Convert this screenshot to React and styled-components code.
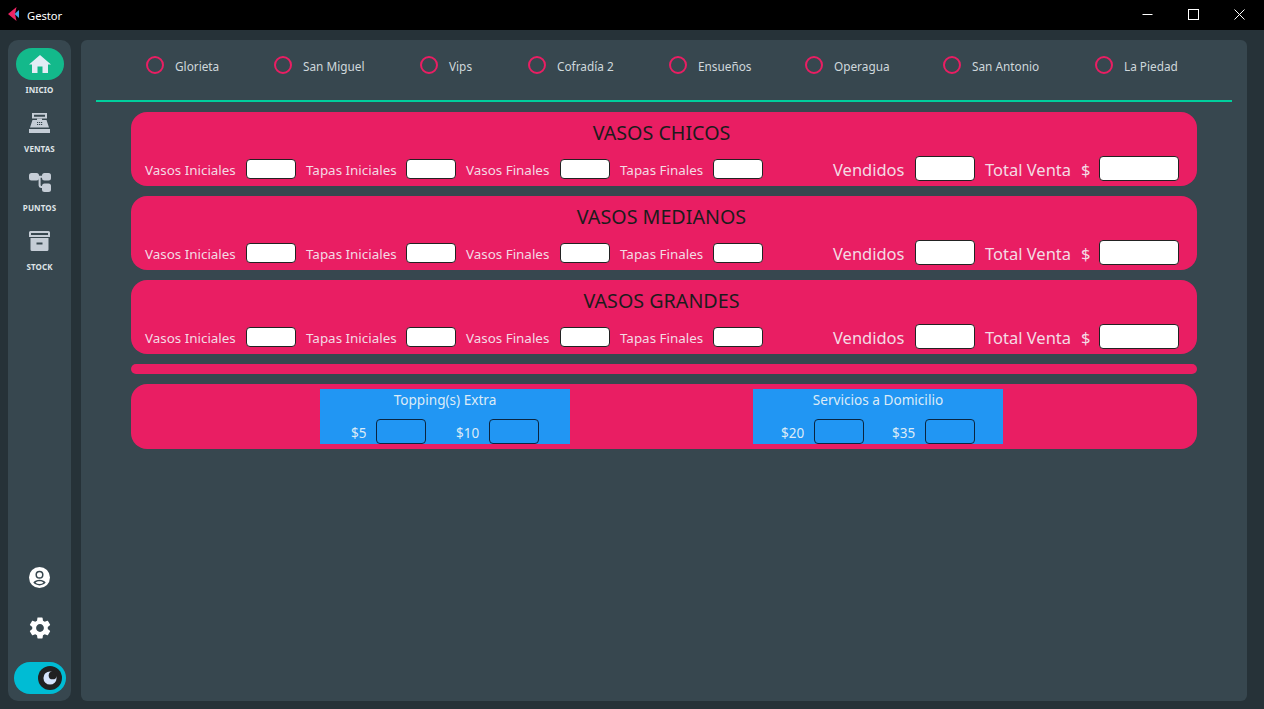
import React from 'react';
import styled, { createGlobalStyle } from 'styled-components';
import { MdSettings } from 'react-icons/md';

const Global = createGlobalStyle`
  html, body { margin: 0; padding: 0; height: 100%; background: #263238; overflow: hidden; }
  * { box-sizing: border-box; }
  body { font-family: "Noto Sans", "Open Sans", "Liberation Sans", sans-serif; }
`;

const Shell = styled.div`
  width: 1264px; height: 709px; display: flex; flex-direction: column; background: #263238;
`;
const TitleBar = styled.header`
  height: 30px; background: #000; display: flex; align-items: center; padding: 0 2px 0 8px; color: #fff; font-size: 11.2px;
`;
const LogoMark = styled.svg`margin-top: -2px; flex: none;`;
const AppName = styled.span`margin-left: 7px; flex: 1;`;
const WinButton = styled.div`
  width: 46px; height: 28px; align-self: flex-start; display: flex; align-items: center; justify-content: center;
`;
const Body = styled.div`
  flex: 1; display: flex; gap: 10px; padding: 10px 17px 8px 8px;
`;
const Sidebar = styled.nav`
  width: 63px; background: #37474f; border-radius: 10px; display: flex; flex-direction: column; align-items: center; padding-top: 8px;
`;
const NavItem = styled.div`
  width: 48px; height: 59px; display: flex; flex-direction: column; align-items: center; color: #c5cdd6;
`;
const NavIcon = styled.div`
  width: 48px; height: 32px; border-radius: 16px; display: flex; align-items: center; justify-content: center;
  background: ${p => (p.$active ? '#13b98b' : 'transparent')};
  color: ${p => (p.$active ? '#e3ecf5' : '#c5cdd6')};
`;
const NavLabel = styled.span`
  font-size: 8px; font-weight: 700; line-height: 12px; margin-top: 4px; color: #dfe4e7; letter-spacing: .1px;
`;
const Spacer = styled.div`flex: 1;`;
const RoundIcon = styled.div`
  height: 50px; display: flex; align-items: center; justify-content: center; color: #fff;
`;
const ProfileSvg = styled.svg`margin-bottom: 2px;`;
const Toggle = styled.div`
  width: 52px; height: 32px; border-radius: 16px; background: #00bcd4; margin: 9px 0 7px; padding: 4px 4px 4px 24px; display: flex;
`;
const Thumb = styled.div`
  width: 24px; height: 24px; border-radius: 50%; background: #212121; display: flex; align-items: center; justify-content: center;
`;
const Main = styled.main`
  flex: 1; background: #37474f; border-radius: 6px; padding: 0 15px; display: flex; flex-direction: column;
`;
const RadioBar = styled.div`
  height: 62px; display: flex; gap: 55px; align-items: center; border-bottom: 2px solid #00cf9d; padding: 0 0 8px 50px;
`;
const RadioItem = styled.label`
  display: flex; align-items: center; gap: 11px; color: #cfd8dc; font-size: 11.8px; white-space: nowrap; width: ${p => p.$w}px; flex: none;
`;
const Ring = styled.span`
  width: 18px; height: 18px; border-radius: 50%; border: 2px solid #e91e63; margin-top: -2px; flex: none;
`;
const Stack = styled.div`
  padding: 10px 35px 0; display: flex; flex-direction: column; gap: 10px;
`;
const Card = styled.section`
  background: #e91e63; height: 74px; border-radius: 16px; padding: 8px 14px 0; display: flex; flex-direction: column;
`;
const Title = styled.h2`
  margin: 0; font-size: 19.7px; line-height: 25px; font-weight: 400; text-align: center; color: #1c1c1c; height: 36px; padding-right: 5px;
`;
const Row = styled.div`
  display: flex; align-items: center; height: 25px; gap: 10px;
`;
const SmallLabel = styled.span`
  font-size: 13.4px; color: #f4dbe4; white-space: nowrap; width: ${p => p.$w}px; margin-top: 2px;
`;
const BigLabel = styled.span`
  font-size: 16.5px; color: #f4dbe4; white-space: nowrap; width: ${p => p.$w}px; margin-left: ${p => p.$ml || 0}px; margin-top: 1px;
`;
const Box = styled.div`
  width: ${p => p.$w}px; height: ${p => p.$h}px; background: #fff; border: 1px solid #222; border-radius: 4px; flex: none;
`;
const Thin = styled.div`height: 10px; background: #e91e63; border-radius: 5px;`;
const ExtrasCard = styled.section`
  background: #e91e63; height: 65px; border-radius: 16px; padding: 5px 0; display: flex;
`;
const Panel = styled.div`
  width: 250px; height: 55px; background: #2196f3; margin-left: ${p => p.$ml}px; display: flex; flex-direction: column;
`;
const PanelTitle = styled.div`
  font-size: 13.6px; color: #dcebf7; text-align: center; line-height: 22px; height: 30px; white-space: nowrap;
`;
const PanelRow = styled.div`
  display: flex; align-items: center; padding-left: ${p => p.$pl}px; height: 25px;
`;
const Price = styled.span`
  font-size: 13.5px; color: #dcebf7; width: ${p => p.$w}px; margin-left: ${p => p.$ml || 0}px; margin-top: 2px;
`;
const GhostBox = styled.div`
  width: 50px; height: 25px; border: 1px solid #0a2540; border-radius: 4px; margin-left: 10px; flex: none;
`;

const stores = [
  ['Glorieta', 73], ['San Miguel', 91], ['Vips', 53], ['Cofradía 2', 86],
  ['Ensueños', 81], ['Operagua', 83], ['San Antonio', 97], ['La Piedad', 83],
];
const sizes = ['VASOS CHICOS', 'VASOS MEDIANOS', 'VASOS GRANDES'];

const Logo = () => (
  <LogoMark width="12" height="14" viewBox="0 0 12 14">
    <path d="M8.500 0 L0 7 L8.500 14 L7 7 Z" fill="#ec2464" />
    <path d="M11 3 L6.500 7 L11 11 Z" fill="#46a4e6" />
  </LogoMark>
);
const HomeIcon = () => (
  <svg width="22" height="18" viewBox="0 0 22 18" fill="currentColor">
    <path d="M11 0 L22 9.500 H19 V18 H13.500 V11.500 H8.500 V18 H3 V9.500 H0 Z" />
  </svg>
);
const RegisterIcon = () => (
  <svg width="21" height="20" viewBox="0 0 21 20" fill="currentColor">
    <path fillRule="evenodd" d="M3 0h15v5.500H3zM5 1.700v2.100h11V1.700z" />
    <path d="M8 5.500h5V7H8z" />
    <path fillRule="evenodd" d="M3.500 7h14L20 14.500H1zM8 9v1h1.200V9zm2 0v1h1.200V9zm2 0v1h1.200V9zM8 11v1h1.200v-1zm2 0v1h1.200v-1zm2 0v1h1.200v-1z" />
    <rect x="0" y="16" width="21" height="4" />
  </svg>
);
const PointsIcon = () => (
  <svg width="22" height="19" viewBox="0 0 22 19" fill="currentColor">
    <rect x="0" y="0" width="10" height="7.500" rx="2.500" />
    <rect x="13" y="0" width="9" height="7.500" rx="2.500" />
    <rect x="13" y="10.500" width="9" height="8.500" rx="2.500" />
    <path d="M9 2.700h5v2h-2.400v7.200a1 1 0 0 0 1 1H14v2h-2a2.400 2.400 0 0 1-2.400-2.400V4.700H9z" />
  </svg>
);
const StockIcon = () => (
  <svg width="21" height="20" viewBox="0 0 21 20" fill="currentColor">
    <path fillRule="evenodd" d="M1.500 0h18A1.500 1.500 0 0 1 21 1.500V6H0V1.500A1.500 1.500 0 0 1 1.500 0zM2 2v2h17V2z" />
    <path fillRule="evenodd" d="M1.500 7h18v11.500a1.500 1.500 0 0 1-1.500 1.500H3a1.500 1.500 0 0 1-1.500-1.500zM7.500 11.500v2h6v-2z" />
  </svg>
);
const ProfileIcon = () => (
  <ProfileSvg width="21" height="21" viewBox="0 0 21 21">
    <circle cx="10.500" cy="10.500" r="10.500" fill="#fff" />
    <circle cx="10.500" cy="7.800" r="3.300" fill="#fff" stroke="#37474f" strokeWidth="1.500" />
    <path d="M4.300 15.600c1.400-2 3.700-2.900 6.200-2.900s4.800.9 6.200 2.900c-1.500 1.700-3.700 2.800-6.200 2.800s-4.700-1.100-6.200-2.800z" fill="#37474f" />
    <path d="M6.500 15.700c1-.9 2.400-1.400 4-1.400s3 .5 4 1.400c-1.100.8-2.500 1.200-4 1.200s-2.900-.4-4-1.200z" fill="#fff" />
  </ProfileSvg>
);
const Moon = () => (
  <svg width="14" height="14" viewBox="0 0 16 16">
    <circle cx="8" cy="8" r="7.500" fill="#d5e3fb" />
    <circle cx="11" cy="5" r="4.500" fill="#212121" />
  </svg>
);

const Fields = () => (
  <Row>
    <SmallLabel $w={91}>Vasos Iniciales</SmallLabel><Box $w={50} $h={20} />
    <SmallLabel $w={90}>Tapas Iniciales</SmallLabel><Box $w={50} $h={20} />
    <SmallLabel $w={84}>Vasos Finales</SmallLabel><Box $w={50} $h={20} />
    <SmallLabel $w={83}>Tapas Finales</SmallLabel><Box $w={50} $h={20} />
    <BigLabel $w={72} $ml={60}>Vendidos</BigLabel><Box $w={60} $h={25} />
    <BigLabel $w={85}>Total Venta</BigLabel>
    <BigLabel $w={8} $ml={1}>$</BigLabel><Box $w={80} $h={25} />
  </Row>
);

export default function App() {
  return (
    <Shell>
      <Global />
      <TitleBar>
        <Logo /><AppName>Gestor</AppName>
        <WinButton><svg width="11" height="11" viewBox="0 0 11 11"><path d="M0.500 5.500h10" stroke="#fff" /></svg></WinButton>
        <WinButton><svg width="11" height="11" viewBox="0 0 11 11"><rect x=".5" y=".5" width="10" height="10" fill="none" stroke="#fff" /></svg></WinButton>
        <WinButton><svg width="11" height="11" viewBox="0 0 11 11"><path d="M.5.5l10 10M10.500.5l-10 10" stroke="#fff" /></svg></WinButton>
      </TitleBar>
      <Body>
        <Sidebar>
          <NavItem><NavIcon $active><HomeIcon /></NavIcon><NavLabel>INICIO</NavLabel></NavItem>
          <NavItem><NavIcon><RegisterIcon /></NavIcon><NavLabel>VENTAS</NavLabel></NavItem>
          <NavItem><NavIcon><PointsIcon /></NavIcon><NavLabel>PUNTOS</NavLabel></NavItem>
          <NavItem><NavIcon><StockIcon /></NavIcon><NavLabel>STOCK</NavLabel></NavItem>
          <Spacer />
          <RoundIcon><ProfileIcon /></RoundIcon>
          <RoundIcon><MdSettings size={26} /></RoundIcon>
          <Toggle><Thumb><Moon /></Thumb></Toggle>
        </Sidebar>
        <Main>
          <RadioBar>
            {stores.map(([s, w]) => <RadioItem key={s} $w={w}><Ring />{s}</RadioItem>)}
          </RadioBar>
          <Stack>
            {sizes.map(s => <Card key={s}><Title>{s}</Title><Fields /></Card>)}
            <Thin />
            <ExtrasCard>
              <Panel $ml={189}>
                <PanelTitle>Topping(s) Extra</PanelTitle>
                <PanelRow $pl={31}>
                  <Price $w={15}>$5</Price><GhostBox />
                  <Price $w={23} $ml={30}>$10</Price><GhostBox />
                </PanelRow>
              </Panel>
              <Panel $ml={183}>
                <PanelTitle>Servicios a Domicilio</PanelTitle>
                <PanelRow $pl={28}>
                  <Price $w={23}>$20</Price><GhostBox />
                  <Price $w={23} $ml={28}>$35</Price><GhostBox />
                </PanelRow>
              </Panel>
            </ExtrasCard>
          </Stack>
        </Main>
      </Body>
    </Shell>
  );
}
